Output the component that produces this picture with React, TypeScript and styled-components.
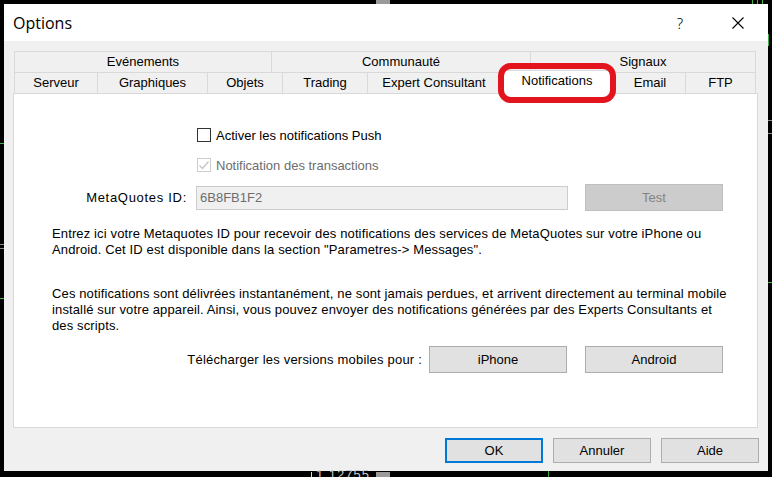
import React from "react";
import styled, { createGlobalStyle } from "styled-components";

const Global = createGlobalStyle`
  html, body { margin: 0; padding: 0; background: #000; }
  body { font-family: "Liberation Sans", Arial, sans-serif; font-size: 13px; color: #000; }
  * { box-sizing: border-box; }
`;

const Screen = styled.div`
  position: relative;
  width: 772px;
  height: 477px;
  overflow: hidden;
  background: #000;
  padding: 4px 4px 6px 4px;
`;

const Dialog = styled.div`
  width: 764px;
  height: 467px;
  background: #f0f0f0;
  display: flex;
  flex-direction: column;
`;

const TitleBar = styled.div`
  height: 37px;
  flex-shrink: 0;
  background: #fff;
  display: flex;
  align-items: center;
  padding: 0 7px 0 9px;
  gap: 12px;
`;

const Title = styled.div`
  flex: 1;
  font-family: "Open Sans", "Noto Sans", sans-serif;
  font-size: 16px;
  color: #000;
`;

const TitleButton = styled.div`
  width: 46px;
  height: 37px;
  display: flex;
  align-items: center;
  justify-content: center;
  font-family: "Noto Sans", sans-serif;
  font-size: 15px;
  font-weight: 300;
  color: #000;
`;

const Body = styled.div`
  flex: 1;
  display: flex;
  flex-direction: column;
  padding: 10px 10px 8px 9px;
`;

const Tabs = styled.div`
  display: flex;
  flex-direction: column;
  margin: 0 2px 0 1px;
`;

const TabRow = styled.div`
  display: flex;
  height: 21px;
`;

const Tab = styled.div<{ $w: number; $active?: boolean }>`
  width: ${(p) => p.$w}px;
  flex-shrink: 0;
  border-top: 1px solid #d9d9d9;
  border-left: 1px solid #d9d9d9;
  background: ${(p) => (p.$active ? "#fff" : "#f0f0f0")};
  text-align: center;
  line-height: 20px;
  white-space: nowrap;
  &:last-child { border-right: 1px solid #d9d9d9; }
  ${(p) =>
    p.$active
      ? `position: relative; z-index: 1; height: 24px; margin: -2px 0 -1px 0; border-right: 1px solid #d9d9d9;`
      : ``}
`;

const Panel = styled.div`
  height: 335px;
  flex-shrink: 0;
  background: #fff;
  border: 1px solid #d9d9d9;
  display: flex;
  flex-direction: column;
  padding-top: 33px;
`;

const CheckRow = styled.label<{ $disabled?: boolean; $gap?: number }>`
  display: flex;
  align-items: center;
  gap: 5px;
  height: 16px;
  margin: ${(p) => p.$gap ?? 0}px 0 0 183px;
  color: ${(p) => (p.$disabled ? "#6d6d6d" : "#000")};
`;

const Box = styled.span<{ $disabled?: boolean }>`
  width: 14px;
  height: 14px;
  border: 1px solid ${(p) => (p.$disabled ? "#cccccc" : "#333")};
  background: #fff;
  display: flex;
  align-items: center;
  justify-content: center;
`;

const FieldRow = styled.div`
  display: flex;
  align-items: center;
  height: 27px;
  margin-top: 11px;
`;

const FieldLabel = styled.div`
  width: 173px;
  text-align: right;
  margin-right: 9px;
  letter-spacing: 0.7px;
`;

const TextField = styled.input`
  width: 372px;
  height: 24px;
  border: 1px solid #cccccc;
  background: #f0f0f0;
  color: #6d6d6d;
  font-family: "Liberation Sans", Arial, sans-serif;
  font-size: 13px;
  padding: 0 0 0 3px;
  margin: 0 17px 0 0;
  outline: none;
`;

const Button = styled.button<{ $w: number; $h: number; $variant?: "default" | "disabled" }>`
  width: ${(p) => p.$w}px;
  height: ${(p) => p.$h}px;
  flex-shrink: 0;
  font-family: "Liberation Sans", Arial, sans-serif;
  font-size: 13px;
  padding: 0;
  margin: 0;
  color: ${(p) => (p.$variant === "disabled" ? "#838383" : "#000")};
  background: ${(p) => (p.$variant === "disabled" ? "#cccccc" : "#e1e1e1")};
  border: ${(p) =>
    p.$variant === "default"
      ? "2px solid #0078d7"
      : p.$variant === "disabled"
      ? "1px solid #bfbfbf"
      : "1px solid #adadad"};
`;

const Paragraph = styled.p<{ $gap: number }>`
  margin: ${(p) => p.$gap}px 0 0 0;
  padding-left: 38px;
  line-height: 16px;
  white-space: nowrap;
  letter-spacing: 0.13px;
`;

const DownloadRow = styled.div`
  display: flex;
  align-items: center;
  justify-content: flex-end;
  gap: 18px;
  height: 27px;
  margin-top: 12px;
  padding-right: 34px;
`;

const DownloadLabel = styled.span`
  margin-right: -11px;
  letter-spacing: 0.2px;
`;

const Footer = styled.div`
  display: flex;
  justify-content: flex-end;
  gap: 10px;
  margin: 10px -1px 0 0;
`;

const Annotation = styled.div`
  position: absolute;
  left: 498px;
  top: 63px;
  width: 118px;
  height: 40px;
  border: 6px solid #e3141d;
  border-radius: 13px;
  z-index: 5;
`;

const Deco = styled.div<{ $c: string }>`
  position: absolute;
  background: ${(p) => p.$c};
`;

const Price = styled.div`
  position: absolute;
  left: 316px;
  top: 468px;
  color: #c8c8c8;
  font-size: 13px;
  line-height: 13px;
  letter-spacing: 1px;
`;

const row1 = [
  { t: "Evénements", w: 257 },
  { t: "Communauté", w: 259 },
  { t: "Signaux", w: 226 },
];

const row2 = [
  { t: "Serveur", w: 83 },
  { t: "Graphiques", w: 110 },
  { t: "Objets", w: 75 },
  { t: "Trading", w: 85 },
  { t: "Expert Consultant", w: 133 },
  { t: "Notifications", w: 114, active: true },
  { t: "Email", w: 71 },
  { t: "FTP", w: 71 },
];

const decos = [
  { l: 0, t: 143, w: 4, h: 1, c: "#3fae3f" },
  { l: 0, t: 244, w: 4, h: 1, c: "#888" },
  { l: 0, t: 248, w: 4, h: 1, c: "#888" },
  { l: 0, t: 298, w: 4, h: 1, c: "#3fae3f" },
  { l: 768, t: 120, w: 4, h: 1, c: "#888" },
  { l: 768, t: 133, w: 4, h: 1, c: "#888" },
  { l: 768, t: 282, w: 4, h: 1, c: "#3fae3f" },
  { l: 768, t: 34, w: 1, h: 12, c: "#3fae3f" },
  { l: 752, t: 0, w: 1, h: 4, c: "#3fae3f" },
  { l: 757, t: 0, w: 1, h: 4, c: "#3fae3f" },
  { l: 762, t: 0, w: 1, h: 4, c: "#3fae3f" },
  { l: 376, t: 0, w: 14, h: 4, c: "#9a9a9a" },
  { l: 376, t: 472, w: 14, h: 5, c: "#9a9a9a" },
  { l: 311, t: 472, w: 1, h: 5, c: "#ddd" },
  { l: 548, t: 471, w: 1, h: 6, c: "#3fae3f" },
];

export default function App() {
  return (
    <>
      <Global />
      <Screen>
        {decos.map((d, i) => (
          <Deco key={i} $c={d.c} style={{ left: d.l, top: d.t, width: d.w, height: d.h }} />
        ))}
        <Price>1.12755</Price>
        <Dialog>
          <TitleBar>
            <Title>Options</Title>
            <TitleButton>?</TitleButton>
            <TitleButton>
              <svg width="12" height="12" viewBox="0 0 12 12">
                <path d="M0.5 0.5 L11.5 11.5 M11.5 0.5 L0.5 11.5" stroke="#000" strokeWidth="1.1" fill="none" />
              </svg>
            </TitleButton>
          </TitleBar>
          <Body>
            <Tabs>
              <TabRow>
                {row1.map((t) => (
                  <Tab key={t.t} $w={t.w}>{t.t}</Tab>
                ))}
              </TabRow>
              <TabRow>
                {row2.map((t) => (
                  <Tab key={t.t} $w={t.w} $active={t.active}>{t.t}</Tab>
                ))}
              </TabRow>
            </Tabs>
            <Panel>
              <CheckRow>
                <Box />
                Activer les notifications Push
              </CheckRow>
              <CheckRow $disabled $gap={14}>
                <Box $disabled>
                  <svg width="12" height="12" viewBox="0 0 12 12">
                    <path d="M1.5 6.5 L4.5 9.5 L10.5 2.5" stroke="#c4c4c4" strokeWidth="1.2" fill="none" />
                  </svg>
                </Box>
                Notification des transactions
              </CheckRow>
              <FieldRow>
                <FieldLabel>MetaQuotes ID:</FieldLabel>
                <TextField readOnly value="6B8FB1F2" />
                <Button $w={138} $h={27} $variant="disabled">Test</Button>
              </FieldRow>
              <Paragraph $gap={15}>
                Entrez ici votre Metaquotes ID pour recevoir des notifications des services de MetaQuotes sur votre iPhone ou
                <br />
                Android. Cet ID est disponible dans la section "Parametres-&gt; Messages".
              </Paragraph>
              <Paragraph $gap={28}>
                Ces notifications sont délivrées instantanément, ne sont jamais perdues, et arrivent directement au terminal mobile
                <br />
                installé sur votre appareil. Ainsi, vous pouvez envoyer des notifications générées par des Experts Consultants et
                <br />
                des scripts.
              </Paragraph>
              <DownloadRow>
                <DownloadLabel>Télécharger les versions mobiles pour :</DownloadLabel>
                <Button $w={138} $h={27}>iPhone</Button>
                <Button $w={138} $h={27}>Android</Button>
              </DownloadRow>
            </Panel>
            <Footer>
              <Button $w={98} $h={25} $variant="default">OK</Button>
              <Button $w={98} $h={25}>Annuler</Button>
              <Button $w={98} $h={25}>Aide</Button>
            </Footer>
          </Body>
        </Dialog>
        <Annotation />
      </Screen>
    </>
  );
}
